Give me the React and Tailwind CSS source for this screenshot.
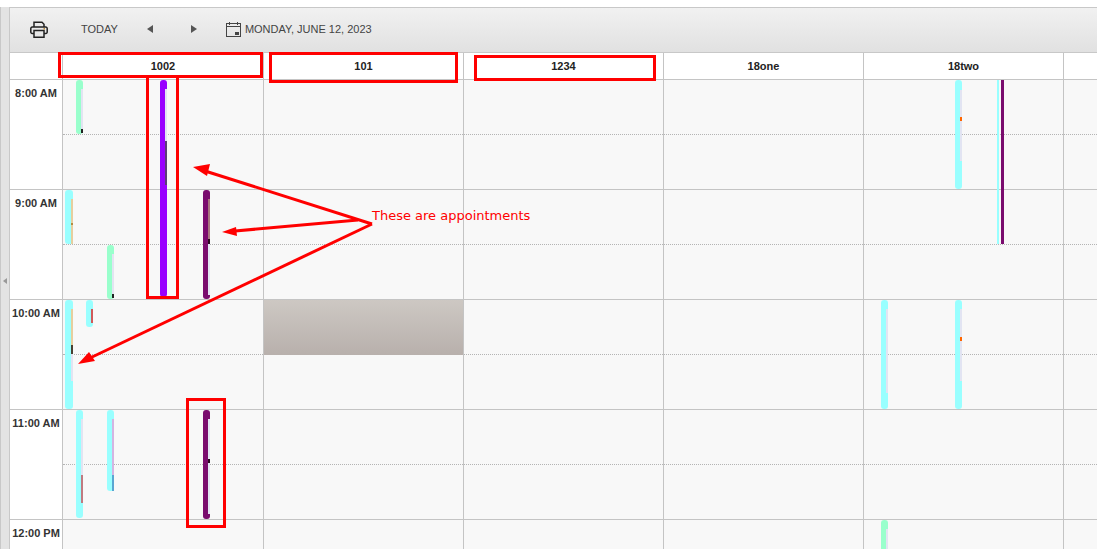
const columns = ['1002', '101', '1234', '18one', '18two', ''];
const hours = ['8:00 AM', '9:00 AM', '10:00 AM', '11:00 AM', '12:00 PM'];

const CYAN = '#99ffff';
const GREEN = '#99ffcc';
const PURPLE = '#9900ff';
const PLUM = '#7a0c6e';
const LIGHT = '#e2e4f2';

// positions are relative to the column, strip offsets relative to the bar
const appointments = [
  { col: 0, x: 13, y: 0, w: 7, h: 54, color: GREEN, strips: [[9, 40, LIGHT], [49, 4, '#222222']] },
  { col: 0, x: 97, y: 0, w: 7, h: 217, color: PURPLE, strips: [[9, 52, LIGHT], [61, 44, '#5c3d78']] },
  { col: 0, x: 140, y: 110, w: 7, h: 109, color: PLUM, strips: [[9, 40, '#a8757f'], [49, 5, '#2a0a20'], [54, 51, LIGHT]] },
  { col: 0, x: 2, y: 110, w: 8, h: 54, color: CYAN, strips: [[9, 24, '#e6cf9f'], [33, 2, '#b58a40'], [35, 19, '#e6cf9f']] },
  { col: 0, x: 44, y: 165, w: 7, h: 54, color: GREEN, strips: [[9, 40, LIGHT], [49, 4, '#222222']] },
  { col: 0, x: 2, y: 220, w: 8, h: 109, color: CYAN, strips: [[9, 36, '#e6cf9f'], [45, 9, '#4a4030'], [54, 27, LIGHT]] },
  { col: 0, x: 23, y: 220, w: 7, h: 27, color: CYAN, strips: [[9, 14, '#d05a5a']] },
  { col: 0, x: 13, y: 330, w: 7, h: 108, color: CYAN, strips: [[9, 56, LIGHT], [65, 28, '#c07a80']] },
  { col: 0, x: 44, y: 330, w: 7, h: 81, color: CYAN, strips: [[9, 56, '#d4b4e2'], [65, 16, '#5aa6d2']] },
  { col: 0, x: 140, y: 330, w: 7, h: 109, color: PLUM, strips: [[9, 40, LIGHT], [49, 4, '#2a0a20'], [53, 51, LIGHT]] },
  { col: 4, x: 91, y: 0, w: 7, h: 109, color: CYAN, strips: [[10, 27, LIGHT], [37, 4, '#ff6600'], [41, 40, LIGHT]] },
  { col: 4, x: 133, y: 0, w: 2, h: 164, color: CYAN, square: true, strips: [] },
  { col: 4, x: 137, y: 0, w: 3, h: 164, color: PLUM, square: true, strips: [] },
  { col: 4, x: 17, y: 220, w: 7, h: 109, color: CYAN, strips: [[9, 84, LIGHT]] },
  { col: 4, x: 91, y: 220, w: 7, h: 109, color: CYAN, strips: [[9, 28, LIGHT], [37, 4, '#ff6600'], [41, 40, LIGHT]] },
  { col: 4, x: 17, y: 440, w: 7, h: 60, color: GREEN, strips: [[9, 51, LIGHT]] },
];

function PrinterIcon() {
  return (
    <svg width="18" height="17" viewBox="0 0 18 17" fill="none" stroke="#222222" strokeWidth="1.5">
      <path d="M4 6V1.2h8l2 2V6" />
      <path d="M4 12.5H2.2A1.4 1.4 0 0 1 .8 11V7.4A1.4 1.4 0 0 1 2.2 6h13.6a1.4 1.4 0 0 1 1.4 1.4V11a1.4 1.4 0 0 1-1.4 1.5H14" />
      <path d="M4 9.5h10v6.7H4z" />
      <path d="M13.5 7.8h1.5" stroke="#b98a3a" />
    </svg>
  );
}

function CalendarIcon() {
  return (
    <svg width="15" height="15" viewBox="0 0 15 15" className="shrink-0" fill="none" stroke="#444444">
      <rect x="0.5" y="1.5" width="14" height="13" />
      <path d="M0.5 4.5h14M3.5 0v3M11.5 0v3" />
      <rect x="9" y="10" width="4" height="3" fill="#444444" stroke="none" />
    </svg>
  );
}

function Appointment({ x, y, w, h, color, strips, square }) {
  return (
    <div className="absolute" style={{ left: x, top: y, width: w, height: h }}>
      <div className={square ? 'h-full w-full' : 'h-full w-full rounded-[3px]'} style={{ backgroundColor: color }} />
      {strips.map(([top, height, stripColor], i) => (
        <div key={i} className="absolute right-0 w-[2px]" style={{ top, height, backgroundColor: stripColor }} />
      ))}
    </div>
  );
}

function Toolbar() {
  return (
    <div className="flex h-[46px] items-center border-t border-b border-[#c8c8c8] bg-gradient-to-b from-[#f1f1f1] to-[#e1e1e1] pb-[2px] text-[11px] text-[#444444]">
      <div className="ml-[20px] flex w-[18px] justify-center"><PrinterIcon /></div>
      <span className="ml-[33px]">TODAY</span>
      <div className="ml-[29px] h-0 w-0 border-y-[4px] border-r-[6px] border-y-transparent border-r-[#555555]" />
      <div className="ml-[38px] h-0 w-0 border-y-[4px] border-l-[6px] border-y-transparent border-l-[#555555]" />
      <div className="ml-[29px]"><CalendarIcon /></div>
      <span className="ml-[4px]">MONDAY, JUNE 12, 2023</span>
    </div>
  );
}

function Annotations() {
  return (
    <>
      <div className="absolute left-[58px] top-[52px] h-[26px] w-[205px] border-[3px] border-[#ff0000]" />
      <div className="absolute left-[269px] top-[52px] h-[31px] w-[189px] border-[3px] border-[#ff0000]" />
      <div className="absolute left-[474px] top-[55px] h-[26px] w-[182px] border-[3px] border-[#ff0000]" />
      <div className="absolute left-[146px] top-[78px] h-[221px] w-[33px] border-[3px] border-t-0 border-[#ff0000]" />
      <div className="absolute left-[186px] top-[398px] h-[130px] w-[40px] border-[3px] border-[#ff0000]" />
      <svg className="absolute left-0 top-0" width="1097" height="549" fill="none" stroke="#ff0000" strokeWidth="3">
        <path d="M372 224L205 171" />
        <path d="M193 167l17-3-3 12z" fill="#ff0000" stroke="none" />
        <path d="M358 220L235 231" />
        <path d="M222 232l14-5 1 9z" fill="#ff0000" stroke="none" />
        <path d="M372 224L90 358" />
        <path d="M78 364l11-12 6 9z" fill="#ff0000" stroke="none" />
      </svg>
      <span className="absolute left-[372px] top-[208px] font-['DejaVu_Sans',sans-serif] text-[13px] leading-[16px] text-[#ff0000]">
        These are appointments
      </span>
    </>
  );
}

export default function App() {
  return (
    <div className="relative h-[549px] w-[1097px] overflow-hidden bg-white pt-[7px] font-['Liberation_Sans',Arial,sans-serif]">
      <div className="flex h-[542px]">
        <div className="flex w-[10px] shrink-0 items-center border-l border-r border-[#c8c8c8] bg-[#e3e3e3] pl-[2px] pt-[6px]">
          <div className="h-0 w-0 border-y-[3px] border-r-[4px] border-y-transparent border-r-[#999999]" />
        </div>
        <div className="min-w-0 flex-1">
          <Toolbar />
          <div className="flex h-[27px] border-b border-[#c4c4c4] bg-white">
            <div className="w-[53px] shrink-0 border-r border-[#c4c4c4]" />
            {columns.map((name, i) => (
              <div key={i} className={`${i === 0 ? 'w-[201px]' : 'w-[200px]'} flex shrink-0 items-center justify-center border-r border-[#c4c4c4] text-[11px] font-bold text-[#222222]`}>
                {name}
              </div>
            ))}
          </div>
          <div className="flex">
            <div className="w-[53px] shrink-0 border-r border-[#c4c4c4] bg-white">
              {hours.map((hour) => (
                <div key={hour} className="h-[110px] border-b border-[#c4c4c4] pt-[7px] text-center text-[11px] font-bold leading-[13px] text-[#333333]">
                  {hour}
                </div>
              ))}
            </div>
            {columns.map((name, col) => (
              <div key={col} className={`${col === 0 ? 'w-[201px]' : 'w-[200px]'} relative shrink-0 border-r border-[#c4c4c4] bg-[#f8f8f8]`}>
                {hours.map((hour) => (
                  <div key={hour} className="h-[110px] border-b border-[#c4c4c4]">
                    <div className="h-[55px] border-b border-dotted border-[#b4b4b4]" />
                  </div>
                ))}
                {col === 1 && (
                  <div className="absolute left-0 right-0 top-[220px] h-[55px] bg-gradient-to-b from-[#cdc8c3] to-[#b8b0ac]" />
                )}
                {appointments.filter((a) => a.col === col).map((a, i) => (
                  <Appointment key={i} {...a} />
                ))}
              </div>
            ))}
          </div>
        </div>
      </div>
      <Annotations />
    </div>
  );
}
